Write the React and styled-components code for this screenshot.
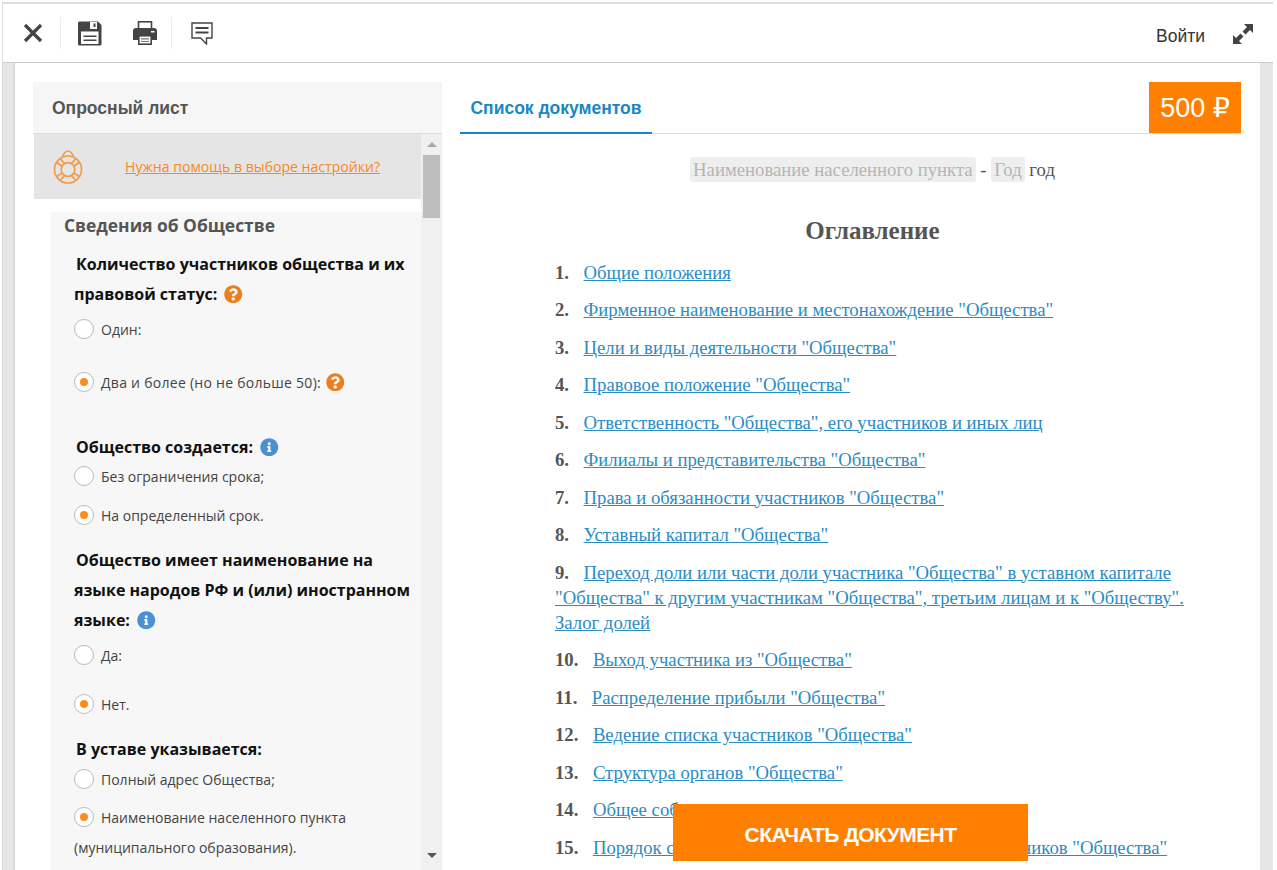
import React from 'react';
import styled, { createGlobalStyle } from 'styled-components';
import { FaQuestionCircle, FaInfoCircle } from 'react-icons/fa';

const GlobalStyle = createGlobalStyle`
  html, body {
    margin: 0;
    padding: 0;
    height: 870px;
    overflow: hidden;
    background: #fff;
    font-family: "Liberation Sans", Arial, sans-serif;
  }
`;

const Frame = styled.div`
  margin: 2px 4px 0 2px;
  height: 868px;
  border-top: 2px solid #ddd;
  border-left: 1px solid #ddd;
  display: flex;
  flex-direction: column;
  box-sizing: border-box;
  overflow: hidden;
`;

const Toolbar = styled.header`
  flex: none;
  height: 58px;
  border-bottom: 1px solid #ccc;
  background: #fff;
  display: flex;
  align-items: center;
`;

const ToolButton = styled.div`
  width: ${props => props.$width}px;
  height: 32px;
  display: flex;
  align-items: center;
  justify-content: center;
  color: #444;
  border-right: ${props => (props.$divider ? '1px solid #eee' : 'none')};
`;

const LoginLink = styled.span`
  margin: 6px 28px 0 auto;
  font-size: 17.5px;
  color: #333;
`;

const ExpandButton = styled.div`
  width: 20px;
  height: 20px;
  margin: 1px 20px 0 0;
  color: #444;
`;

const Backdrop = styled.div`
  flex: 1;
  min-height: 0;
  background: #e6e6e6;
  padding: 0 13px 0 12px;
`;

const Sheet = styled.div`
  height: 100%;
  box-sizing: border-box;
  background: #fff;
  padding: 19px 19px 0 18px;
  box-shadow: -1px 0 2px #ccc;
  display: flex;
  gap: 18px;
  overflow: hidden;
`;

const LeftPanel = styled.aside`
  flex: none;
  width: 409px;
  display: flex;
  flex-direction: column;
`;

const PanelTitle = styled.div`
  flex: none;
  height: 51px;
  line-height: 52px;
  padding-left: 19px;
  background: #f6f6f6;
  border-bottom: 1px solid #ddd;
  font-size: 17.5px;
  font-weight: bold;
  color: #555;
`;

const PanelBody = styled.div`
  flex: 1;
  min-height: 0;
  display: flex;
`;

const FormScroll = styled.div`
  flex: 1;
  min-width: 0;
  overflow: hidden;
`;

const HelpBand = styled.div`
  height: 65px;
  margin-left: 1px;
  background: #e5e5e5;
  display: flex;
  align-items: center;
  padding-left: 19px;
  gap: 42px;
`;

const HelpLink = styled.a`
  font-family: "Open Sans", sans-serif;
  font-size: 14.1px;
  color: #f58a1f;
  text-decoration: underline;
`;

const FormSection = styled.section`
  margin: 13px 0 0 18px;
  padding: 0 4px 20px 23px;
  background: #f7f7f7;
  font-family: "Open Sans", sans-serif;
`;

const SectionTitle = styled.h2`
  margin: 0 0 0 -10px;
  height: 37px;
  line-height: 27px;
  font-size: 17.4px;
  font-weight: bold;
  color: #555;
`;

const Question = styled.p`
  margin: ${props => props.$top || 0}px 0 0;
  line-height: 30px;
  font-size: 16px;
  font-weight: bold;
  color: #111;
  text-indent: 2px;
`;

const Option = styled.div`
  margin-top: ${props => props.$top || 0}px;
  line-height: 30px;
  font-size: 14px;
  letter-spacing: ${props => props.$spread || 0}px;
  color: #444;
`;

const Radio = styled.span`
  display: inline-block;
  position: relative;
  box-sizing: border-box;
  width: 20px;
  height: 20px;
  margin: 4px 7px 0 0;
  vertical-align: top;
  background: #fff;
  border: 1px solid #bbb;
  border-radius: 50%;

  &::after {
    content: '';
    display: ${props => (props.$checked ? 'block' : 'none')};
    position: absolute;
    left: 5px;
    top: 5px;
    width: 8px;
    height: 8px;
    border-radius: 50%;
    background: #ff8c1a;
  }
`;

const HintIcon = styled.span`
  display: inline-block;
  margin-left: 1px;
  vertical-align: -3px;
  line-height: 0;
  font-size: 18.5px;
  color: ${props => (props.$info ? '#4a90d2' : '#ec7e1d')};
`;

const Scrollbar = styled.div`
  flex: none;
  width: 21px;
  background: #f0f0f0;
  display: flex;
  flex-direction: column;
  align-items: center;
`;

const ScrollArrow = styled.div`
  flex: none;
  width: 0;
  height: 0;
  border-left: 5px solid transparent;
  border-right: 5px solid transparent;
  margin: ${props => (props.$down ? '0 0 12px' : '8px 0 8px')};
  border-bottom: ${props => (props.$down ? 'none' : '5px solid #aaa')};
  border-top: ${props => (props.$down ? '5px solid #555' : 'none')};
`;

const ScrollThumb = styled.div`
  flex: none;
  width: 17px;
  height: 63px;
  background: #bdbdbd;
`;

const ScrollSpacer = styled.div`
  flex: 1;
`;

const RightPanel = styled.main`
  flex: 1;
  min-width: 0;
  display: flex;
  flex-direction: column;
`;

const TabBar = styled.div`
  flex: none;
  height: 52px;
  box-sizing: border-box;
  border-bottom: 1px solid #ddd;
  display: flex;
  justify-content: space-between;
`;

const Tab = styled.div`
  width: 192px;
  height: 52px;
  box-sizing: border-box;
  border-bottom: 2px solid #1a86c8;
  line-height: 52px;
  text-align: center;
  font-size: 17.5px;
  font-weight: bold;
  color: #1a86c8;
`;

const Price = styled.div`
  width: 92px;
  height: 51px;
  line-height: 52px;
  text-align: center;
  background: #ff8000;
  color: #fff;
  font-size: 27px;
`;

const RubleSign = styled.span`
  font-family: "DejaVu Sans", sans-serif;
  font-weight: normal;
`;

const Doc = styled.article`
  padding: 0 51px 0 95px;
  font-family: "Liberation Serif", "Times New Roman", serif;
  font-size: 18.72px;
  line-height: 25px;
  color: #555;
`;

const DocMeta = styled.div`
  margin-top: 23px;
  text-align: center;
`;

const Placeholder = styled.span`
  display: inline-block;
  padding: 0 3px;
  background: #eee;
  border-radius: 3px;
  color: #b5b5b5;
`;

const DocTitle = styled.h1`
  margin: 34px 0 13.5px;
  text-align: center;
  font-size: 25px;
  line-height: 30px;
  font-weight: bold;
  color: #555;
`;

const TocItem = styled.p`
  margin: 12.5px 0 0;
`;

const TocNumber = styled.b`
  margin-right: 14.5px;
`;

const TocLink = styled.a`
  color: #2b8cc4;
  text-decoration: underline;
`;

const DownloadButton = styled.button`
  position: fixed;
  left: 673px;
  top: 804px;
  width: 355px;
  height: 57px;
  padding: 5px 0 0;
  border: none;
  background: #ff8000;
  color: #fff;
  font-family: "Liberation Sans", Arial, sans-serif;
  font-size: 21px;
  font-weight: bold;
  letter-spacing: -0.6px;
`;

const CloseGlyph = styled.svg`
  margin-left: 3px;
`;

const SaveIcon = () => (
  <svg width="24" height="25" viewBox="0 0 24 25" aria-hidden="true">
    <path d="M1.500 0.500H20L23.500 4V23a1.500 1.500 0 0 1-1.500 1.500H1.500A1.500 1.500 0 0 1 0 23V2A1.500 1.500 0 0 1 1.500.5z" fill="#444" />
    <rect x="12" y="1" width="7" height="7" fill="#fff" />
    <rect x="15.500" y="2.500" width="2" height="3.500" fill="#444" />
    <rect x="3" y="10.500" width="17.500" height="12.500" fill="#fff" />
    <rect x="5.500" y="14.500" width="13" height="1.500" fill="#444" />
    <rect x="5.500" y="18.500" width="13" height="1.500" fill="#444" />
  </svg>
);

const PrintIcon = () => (
  <svg width="24" height="24" viewBox="0 0 24 24" aria-hidden="true">
    <rect x="5.500" y="0.800" width="13" height="8" fill="#fff" stroke="#444" strokeWidth="1.600" />
    <path d="M3 7h18a3 3 0 0 1 3 3v9H0v-9a3 3 0 0 1 3-3z" fill="#444" />
    <rect x="18" y="10" width="3.500" height="1.500" fill="#fff" />
    <rect x="5.800" y="14.800" width="12.400" height="8.400" fill="#fff" stroke="#444" strokeWidth="1.600" />
    <path d="M8 17.800h8M8 20.500h8" stroke="#777" strokeWidth="1.200" />
  </svg>
);

const CommentIcon = () => (
  <svg width="22" height="23" viewBox="0 0 22 23" fill="none" stroke="#444" aria-hidden="true">
    <path d="M1 1h20v15h-5.500v6l-6-6H1z" strokeWidth="1.400" />
    <path d="M4.500 6h13M4.500 10.500h13" strokeWidth="2" />
  </svg>
);

const CloseIcon = () => (
  <CloseGlyph width="20" height="20" viewBox="0 0 20 20" aria-hidden="true">
    <path d="M2 2l16 16M18 2L2 18" stroke="#444" strokeWidth="3.200" />
  </CloseGlyph>
);

const ExpandIcon = () => (
  <svg width="20" height="20" viewBox="0 0 20 20" fill="#444" aria-hidden="true">
    <path d="M11 0h9v9l-3-3-4.500 4.500-3-3L14 3z" />
    <path d="M0 11v9h9l-3-3 4.500-4.500-3-3L3 14z" />
  </svg>
);

const BuoyIcon = () => (
  <svg width="30" height="34" viewBox="0 0 30 34" fill="none" stroke="#f39a4a" strokeWidth="1.700" aria-hidden="true">
    <circle cx="15" cy="19.500" r="13.500" />
    <circle cx="15" cy="19.500" r="6.800" />
    <path d="M11.500 13.500L7.500 9M8.800 16L4 12.500M18.500 13.500L22.500 9M21.200 16L26 12.500M11.500 25.500L7.500 30M8.800 23L4 26.500M18.500 25.500L22.500 30M21.200 23L26 26.500" />
    <path d="M9.500 6.500C11 3 13 1 15 1s4 2 5.500 5.500" />
  </svg>
);

const Hint = ({ info }) => (
  <HintIcon $info={info}>{info ? <FaInfoCircle /> : <FaQuestionCircle />}</HintIcon>
);

const tocItems = [
  'Общие положения',
  'Фирменное наименование и местонахождение "Общества"',
  'Цели и виды деятельности "Общества"',
  'Правовое положение "Общества"',
  'Ответственность "Общества", его участников и иных лиц',
  'Филиалы и представительства "Общества"',
  'Права и обязанности участников "Общества"',
  'Уставный капитал "Общества"',
  'Переход доли или части доли участника "Общества" в уставном капитале "Общества" к другим участникам "Общества", третьим лицам и к "Обществу". Залог долей',
  'Выход участника из "Общества"',
  'Распределение прибыли "Общества"',
  'Ведение списка участников "Общества"',
  'Структура органов "Общества"',
  'Общее собрание участников',
  'Порядок созыва и проведения общего собрания участников "Общества"'
];

export default function App() {
  return (
    <>
      <GlobalStyle />
      <Frame>
        <Toolbar>
          <ToolButton $width={57} $divider>
            <CloseIcon />
          </ToolButton>
          <ToolButton $width={57}>
            <SaveIcon />
          </ToolButton>
          <ToolButton $width={53} $divider>
            <PrintIcon />
          </ToolButton>
          <ToolButton $width={60}>
            <CommentIcon />
          </ToolButton>
          <LoginLink>Войти</LoginLink>
          <ExpandButton>
            <ExpandIcon />
          </ExpandButton>
        </Toolbar>
        <Backdrop>
          <Sheet>
            <LeftPanel>
              <PanelTitle>Опросный лист</PanelTitle>
              <PanelBody>
                <FormScroll>
                  <HelpBand>
                    <BuoyIcon />
                    <HelpLink>Нужна помощь в выборе настройки?</HelpLink>
                  </HelpBand>
                  <FormSection>
                    <SectionTitle>Сведения об Обществе</SectionTitle>
                    <Question>
                      Количество участников общества и их правовой статус: <Hint />
                    </Question>
                    <Option $top={6}>
                      <Radio />
                      Один:
                    </Option>
                    <Option $top={23} $spread={0.27}>
                      <Radio $checked />
                      Два и более (но не больше 50): <Hint />
                    </Option>
                    <Question $top={34}>
                      Общество создается: <Hint info />
                    </Question>
                    <Option>
                      <Radio />
                      Без ограничения срока;
                    </Option>
                    <Option $top={9}>
                      <Radio $checked />
                      На определенный срок.
                    </Option>
                    <Question $top={14}>
                      Общество имеет наименование на языке народов РФ и (или) иностранном языке: <Hint info />
                    </Question>
                    <Option $top={6}>
                      <Radio />
                      Да:
                    </Option>
                    <Option $top={19}>
                      <Radio $checked />
                      Нет.
                    </Option>
                    <Question $top={14}>В уставе указывается:</Question>
                    <Option $top={1}>
                      <Radio />
                      Полный адрес Общества;
                    </Option>
                    <Option $top={8}>
                      <Radio $checked />
                      Наименование населенного пункта (муниципального образования).
                    </Option>
                  </FormSection>
                </FormScroll>
                <Scrollbar>
                  <ScrollArrow />
                  <ScrollThumb />
                  <ScrollSpacer />
                  <ScrollArrow $down />
                </Scrollbar>
              </PanelBody>
            </LeftPanel>
            <RightPanel>
              <TabBar>
                <Tab>Список документов</Tab>
                <Price>
                  500 <RubleSign>₽</RubleSign>
                </Price>
              </TabBar>
              <Doc>
                <DocMeta>
                  <Placeholder>Наименование населенного пункта</Placeholder> - <Placeholder>Год</Placeholder> год
                </DocMeta>
                <DocTitle>Оглавление</DocTitle>
                {tocItems.map((item, index) => (
                  <TocItem key={item}>
                    <TocNumber>{index + 1}.</TocNumber>
                    <TocLink>{item}</TocLink>
                  </TocItem>
                ))}
              </Doc>
            </RightPanel>
          </Sheet>
        </Backdrop>
      </Frame>
      <DownloadButton>СКАЧАТЬ ДОКУМЕНТ</DownloadButton>
    </>
  );
}
